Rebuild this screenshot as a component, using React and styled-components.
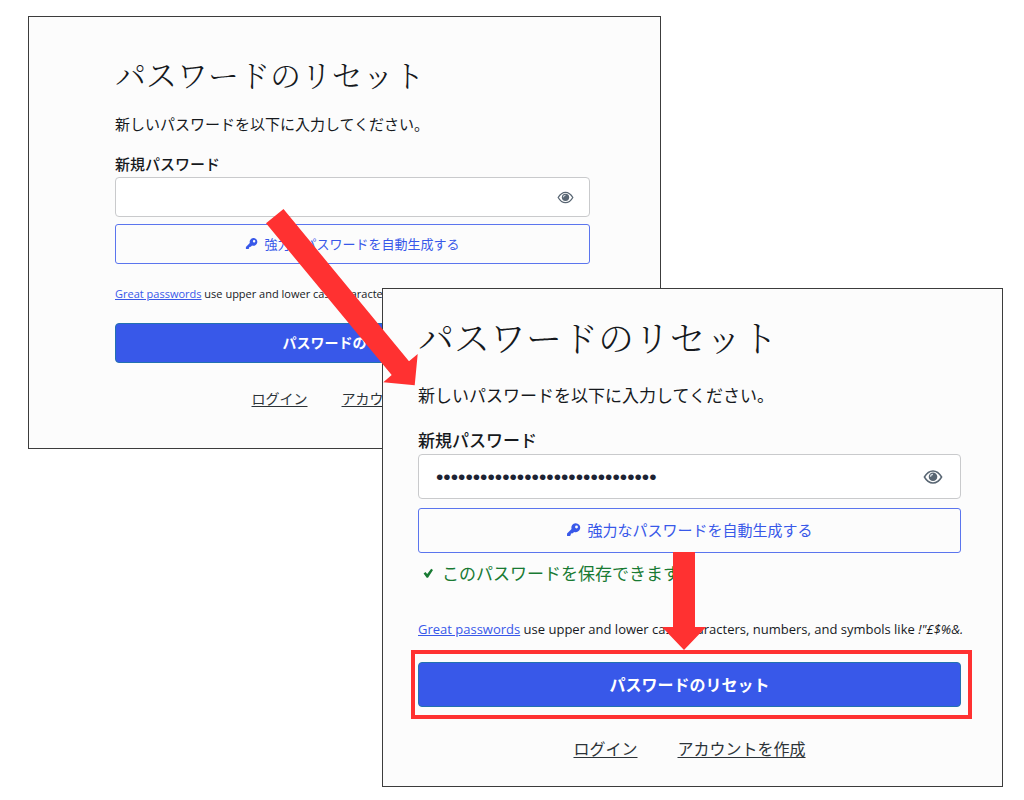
import React, { useId } from "react";
import styled, { createGlobalStyle, ThemeProvider } from "styled-components";

const GlobalStyle = createGlobalStyle`
  *, *::before, *::after { box-sizing: border-box; }
  body {
    margin: 0;
    background: #ffffff;
    color: #16191d;
    font-family: "Open Sans", "Noto Sans CJK JP", sans-serif;
  }
`;

const small = {
  pad: "36px 70px 40px 86px",
  title: 31, titleLine: 42, text: 15, line: 20, control: 40,
  button: 13, submit: 14, hint: 11, dots: 18,
  gapText: 19, gapLabel: 20, gapField: 3, gapControl: 7, gapHint: 20, gapSubmit: 19, gapLinks: 25,
  linkGap: 34, eye: 17, key: 13, inset: 16,
};

const large = {
  pad: "24px 41px 26px 35px",
  title: 36, titleLine: 48, text: 17, line: 24, control: 45,
  button: 15, submit: 16, hint: 13, dots: 21,
  gapText: 22, gapLabel: 21, gapField: 2, gapControl: 9, gapHint: 34, gapSubmit: 23, gapLinks: 29,
  linkGap: 40, eye: 20, key: 15, inset: 18,
};

const Stage = styled.main`
  display: grid;
  grid-template-columns: 354fr 279fr 342fr;
  grid-template-rows: 272px auto;
  padding: 16px 21px 14px 28px;
`;

const Panel = styled.section`
  position: relative;
  align-self: start;
  grid-column: ${(p) => (p.$front ? "2 / 4" : "1 / 3")};
  grid-row: ${(p) => (p.$front ? "2" : "1 / 3")};
  padding: ${(p) => p.theme.pad};
  border: 1px solid #3c3c3c;
  background: #fcfcfc;
`;

const Form = styled.form`
  display: flex;
  flex-direction: column;
`;

const Title = styled.h1`
  margin: 0;
  font-family: "Noto Serif CJK JP", "Noto Sans CJK JP", serif;
  font-weight: 300;
  font-size: ${(p) => p.theme.title}px;
  line-height: ${(p) => p.theme.titleLine}px;
  white-space: nowrap;
`;

const Lead = styled.p`
  margin: ${(p) => p.theme.gapText}px 0 0;
  font-family: "Noto Sans CJK JP", sans-serif;
  font-size: ${(p) => p.theme.text}px;
  line-height: ${(p) => p.theme.line}px;
`;

const Label = styled.label`
  margin-top: ${(p) => p.theme.gapLabel}px;
  font-family: "Noto Sans CJK JP", sans-serif;
  font-weight: 500;
  font-size: ${(p) => p.theme.text}px;
  line-height: ${(p) => p.theme.line}px;
`;

const Field = styled.div`
  display: flex;
  align-items: center;
  height: ${(p) => p.theme.control}px;
  margin-top: ${(p) => p.theme.gapField}px;
  padding: 0 ${(p) => p.theme.inset - 1}px;
  border: 1px solid #c9cacc;
  border-radius: 4px;
  background: #ffffff;
`;

const PasswordInput = styled.input`
  flex: 1;
  min-width: 0;
  padding: 0;
  border: 0;
  outline: 0;
  background: transparent;
  color: #1d2333;
  font-family: "Liberation Sans", sans-serif;
  font-size: ${(p) => p.theme.dots}px;
`;

const IconButton = styled.button`
  display: flex;
  padding: 0;
  border: 0;
  background: none;
  color: #596673;
`;

const OutlineButton = styled.button`
  display: flex;
  align-items: center;
  justify-content: center;
  gap: 6px;
  height: ${(p) => p.theme.control}px;
  margin-top: ${(p) => p.theme.gapControl}px;
  padding: 0 0 2px;
  border: 1px solid #5b75ee;
  border-radius: 3px;
  background: #fcfcfc;
  color: #3858e9;
  font-family: "Noto Sans CJK JP", sans-serif;
  font-size: ${(p) => p.theme.button}px;
`;

const Success = styled.p`
  display: flex;
  align-items: center;
  gap: 8px;
  margin: 8px 0 0;
  padding-left: 5px;
  color: #187a33;
  font-family: "Noto Sans CJK JP", sans-serif;
  font-size: ${(p) => p.theme.text}px;
  line-height: ${(p) => p.theme.line}px;
`;

const Hint = styled.p`
  margin: ${(p) => p.theme.gapHint}px 0 0;
  font-size: ${(p) => p.theme.hint}px;
  line-height: 20px;
  white-space: nowrap;
`;

const HintLink = styled.a`
  color: #3858e9;
`;

const SubmitWrap = styled.div`
  position: relative;
  margin-top: ${(p) => p.theme.gapSubmit}px;
`;

const Submit = styled.button`
  display: block;
  width: 100%;
  height: ${(p) => p.theme.control}px;
  padding: 0 0 2px;
  border: 1px solid #2271b1;
  border-radius: 4px;
  background: #3858e9;
  color: #ffffff;
  font-family: "Noto Sans CJK JP", sans-serif;
  font-weight: 700;
  font-size: ${(p) => p.theme.submit}px;
`;

const Highlight = styled.span`
  position: absolute;
  inset: -12px -11px -12px -7px;
  border: 4px solid #ff3131;
  pointer-events: none;
`;

const DownArrow = styled.svg`
  position: absolute;
  left: calc(49% - 22px);
  bottom: calc(100% + 12px);
  pointer-events: none;
`;

const DiagonalArrow = styled.svg`
  position: absolute;
  left: -117px;
  top: -80px;
  pointer-events: none;
`;

const Links = styled.nav`
  display: flex;
  justify-content: center;
  gap: ${(p) => p.theme.linkGap}px;
  margin-top: ${(p) => p.theme.gapLinks}px;
  font-family: "Noto Sans CJK JP", sans-serif;
  font-size: ${(p) => p.theme.submit}px;
  line-height: ${(p) => p.theme.line}px;
`;

const NavLink = styled.a`
  color: #2c3338;
  text-underline-offset: 2px;
`;

const EyeIcon = ({ size }) => (
  <svg width={size} height={size} viewBox="0 0 20 20" aria-hidden="true">
    <path
      d="M1.4 10C3.6 6.2 6.6 3.9 10 3.9s6.4 2.3 8.6 6.1c-2.2 3.8-5.2 6.1-8.6 6.1S3.6 13.8 1.4 10z"
      fill="none"
      stroke="currentColor"
      strokeWidth="1.5"
    />
    <circle cx="10" cy="9.8" r="4.3" fill="currentColor" />
    <path d="M7.5 9.8A2.6 2.6 0 0 1 10 7.3" fill="none" stroke="#d4dae0" strokeWidth="1.3" />
  </svg>
);

const KeyIcon = ({ size }) => (
  <svg width={size} height={size} viewBox="0 0 20 20" aria-hidden="true">
    <path
      d="M12.7 1.6a6 6 0 1 1-1.9 11.6L9 15l-2.4.4-.4 2.4-1.1.8H1.4v-3.4l6-6A6 6 0 0 1 12.7 1.6zm1.3 3.2a1.9 1.9 0 1 0 0 3.8 1.9 1.9 0 0 0 0-3.8z"
      fill="currentColor"
      fillRule="evenodd"
    />
  </svg>
);

const CheckIcon = () => (
  <svg width="11" height="11" viewBox="0 0 11 11" aria-hidden="true">
    <path d="M.6 5.4 2.5 4 4.2 6.1 8.2.7 10 1.9 5 9.7H3.7z" fill="currentColor" />
  </svg>
);

function ResetForm({ theme, value, front }) {
  const id = useId();
  return (
    <ThemeProvider theme={theme}>
      <Panel $front={front}>
        <Form onSubmit={(e) => e.preventDefault()}>
          <Title>パスワードのリセット</Title>
          <Lead>新しいパスワードを以下に入力してください。</Lead>
          <Label htmlFor={id}>新規パスワード</Label>
          <Field>
            <PasswordInput id={id} type="password" defaultValue={value} autoComplete="new-password" />
            <IconButton type="button" aria-label="パスワードを表示">
              <EyeIcon size={theme.eye} />
            </IconButton>
          </Field>
          <OutlineButton type="button">
            <KeyIcon size={theme.key} />
            強力なパスワードを自動生成する
          </OutlineButton>
          {front && (
            <Success>
              <CheckIcon />
              このパスワードを保存できます。
            </Success>
          )}
          <Hint>
            <HintLink href="#passwords">Great passwords</HintLink> use upper and lower case characters,
            numbers, and symbols like <em>!"£$%&amp;.</em>
          </Hint>
          <SubmitWrap>
            <Submit type="submit">パスワードのリセット</Submit>
            {front && (
              <>
                <Highlight />
                <DownArrow width="44" height="98" viewBox="0 0 44 98" aria-hidden="true">
                  <path d="M11 0H33V75H44L22 98 0 75H11z" fill="#ff3131" />
                </DownArrow>
              </>
            )}
          </SubmitWrap>
          <Links>
            <NavLink href="#login">ログイン</NavLink>
            <NavLink href="#signup">アカウントを作成</NavLink>
          </Links>
        </Form>
        {front && (
          <DiagonalArrow width="152" height="177" viewBox="0 0 152 177" aria-hidden="true">
            <path d="M17.5 0 143 152.3 151.7 145 148.7 176.3 117.3 173.3 125.7 166 0 14.3z" fill="#ff3131" />
          </DiagonalArrow>
        )}
      </Panel>
    </ThemeProvider>
  );
}

export default function App() {
  return (
    <>
      <GlobalStyle />
      <Stage>
        <ResetForm theme={small} value="" />
        <ResetForm theme={large} value="abcdefghijklmnopqrstuvwxyz1234" front />
      </Stage>
    </>
  );
}
